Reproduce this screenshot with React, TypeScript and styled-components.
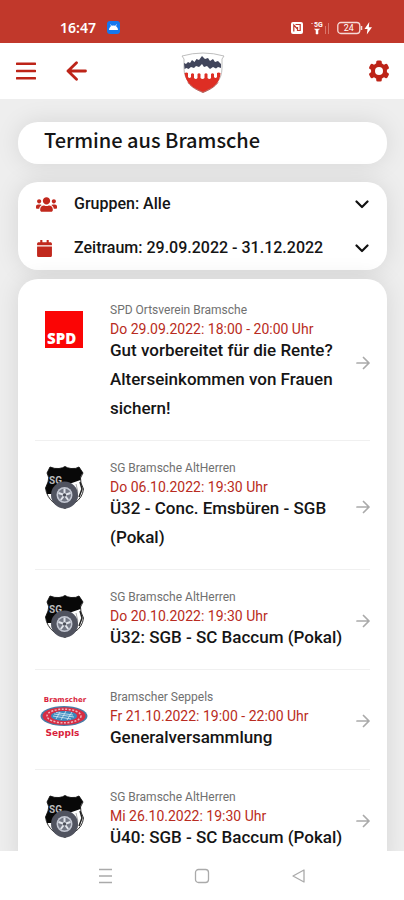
import React from "react";
import styled, { createGlobalStyle } from "styled-components";
import { FaCalendar, FaUsers } from "react-icons/fa";

const GlobalStyle = createGlobalStyle`
  * { box-sizing: border-box; }
  body { margin: 0; background: #fff; font-family: Roboto, "Liberation Sans", sans-serif; color: #151515; }
  button { font: inherit; color: inherit; background: none; border: 0; padding: 0; cursor: pointer; }
  a { color: inherit; text-decoration: none; }
  svg { display: block; flex: none; }
`;

const Screen = styled.div`
  height: 100vh;
  display: flex;
  flex-direction: column;
`;

const StatusBar = styled.div`
  flex: none;
  height: 43px;
  padding: 12px 31px 0 60px;
  display: flex;
  align-items: center;
  justify-content: space-between;
  background: #c1382b;
  color: #fff;
`;

const StatusGroup = styled.div<{ $gap: number }>`
  display: flex;
  align-items: center;
  gap: ${(p) => p.$gap}px;
`;

const Clock = styled.time`
  font: 600 14px/20px "Noto Sans", sans-serif;
`;

const Header = styled.header`
  position: relative;
  z-index: 1;
  flex: none;
  height: 56px;
  padding: 0 14px 0 16px;
  display: grid;
  grid-template-columns: 1fr auto 1fr;
  align-items: center;
  background: #fff;
  color: #bd2418;
`;

const HeaderSide = styled.div<{ $end?: boolean }>`
  display: flex;
  gap: 30px;
  justify-content: ${(p) => (p.$end ? "flex-end" : "flex-start")};
`;

const Content = styled.main`
  flex: 1;
  min-height: 0;
  overflow-y: auto;
  scrollbar-width: none;
  padding: 23px 17px 0 18px;
  background: #eeeeee;
`;

const Card = styled.section`
  background: #fff;
  border-radius: 20px;
  box-shadow: 0 0 24px rgba(0, 0, 0, 0.1);
`;

const TitleCard = styled(Card)`
  padding: 3px 26px 9px;
  margin-bottom: 18px;
`;

const PageTitle = styled.h1`
  margin: 0;
  font: 500 20px/30px "Noto Sans CJK SC", sans-serif;
`;

const FilterCard = styled(Card)`
  margin-bottom: 9px;
`;

const FilterButton = styled.button`
  width: 100%;
  height: 44px;
  padding: 0 18px;
  display: grid;
  grid-template-columns: 22px 1fr auto;
  column-gap: 16px;
  align-items: center;
  text-align: left;
  font-size: 16px;
  line-height: 20px;
  font-weight: 500;
`;

const FilterIcon = styled.span`
  color: #c1281d;
`;

const EventList = styled(Card).attrs({ as: "ul" })`
  list-style: none;
  margin: 0;
  padding: 4px 17px;
`;

const EventItem = styled.li`
  border-bottom: 1px solid #f0f0f0;
  &:last-child { border-bottom: 0; }
`;

const EventLink = styled.a`
  display: flex;
  align-items: center;
  padding: 20px 0 17px 5px;
`;

const LogoBox = styled.div`
  align-self: flex-start;
  flex: none;
  width: 48px;
  height: 48px;
  margin: 2px 22px 0 0;
  display: flex;
  align-items: center;
  justify-content: center;
`;

const EventText = styled.div`
  flex: 1;
  min-width: 0;
`;

const Organizer = styled.div`
  font-size: 12px;
  line-height: 14px;
  margin-bottom: 5px;
  color: #707070;
`;

const EventDate = styled.div`
  font-size: 14px;
  line-height: 14px;
  color: #b92b21;
`;

const EventTitle = styled.h2`
  margin: 0;
  font-size: 17px;
  line-height: 29px;
  font-weight: 500;
`;

const NavBar = styled.nav`
  position: relative;
  flex: none;
  height: 49px;
  padding: 0 96px;
  display: flex;
  align-items: center;
  justify-content: space-between;
  background: #fff;
`;

const NfcIcon = () => (
  <svg width="12" height="12" viewBox="0 0 12 12">
    <rect width="12" height="12" rx="2" fill="#fff" />
    <path d="M2.8 9.5V3L6 6.5M4.5 2.5h4.7v6H6.5V5" fill="none" stroke="#c1382b" strokeWidth="1.2" />
  </svg>
);

const SignalIcon = () => (
  <svg width="20" height="14" viewBox="0 0 20 14">
    <text x="4" y="6" fontSize="7" fontWeight="700" fontFamily="Roboto, sans-serif" fill="#fff">5G</text>
    <path d="M1 2.5h2M4.5 8h5L7 10zM6 9h2v4H6z" fill="#fff" stroke="#fff" strokeWidth=".5" />
    <path d="M15.5 5v8M18.5 2v11" stroke="#d9776d" />
  </svg>
);

const BatteryIcon = () => (
  <svg width="36" height="14" viewBox="0 0 36 14">
    <rect x=".8" y="1.5" width="22" height="11" rx="3" fill="none" stroke="#f6d9d6" strokeWidth="1.3" />
    <path d="M24.5 5v4" stroke="#f6d9d6" strokeWidth="1.5" />
    <text x="11.8" y="10.3" textAnchor="middle" fontSize="9" fontFamily="Roboto, sans-serif" fill="#fff">24</text>
    <path d="M32.3 1l-4.8 7h3l-.7 5.5 5.2-7.2h-3.2z" fill="#fff" />
  </svg>
);

const AndroidIcon = () => (
  <svg width="13" height="13" viewBox="0 0 13 13">
    <rect width="13" height="13" rx="3" fill="#1677ee" />
    <path d="M2 9a4.5 4.5 0 019 0z" fill="#fff" />
    <path d="M3.500 3.500l1.300 2M9.500 3.500l-1.300 2" stroke="#fff" strokeWidth=".8" />
  </svg>
);

const MenuIcon = () => (
  <svg width="20" height="18" viewBox="0 0 20 18">
    <path d="M1 1.7h18M1 9h18M1 16.3h18" stroke="currentColor" strokeWidth="2.6" strokeLinecap="round" />
  </svg>
);

const BackIcon = () => (
  <svg width="21" height="20" viewBox="0 0 21 20">
    <path d="M10.5 1.7L2 10l8.500 8.300M2 10h17.500" fill="none" stroke="currentColor" strokeWidth="2.8" strokeLinecap="round" strokeLinejoin="round" />
  </svg>
);

const GearIcon = () => (
  <svg width="22" height="22" viewBox="0 0 22 22">
    <g fill="currentColor">
      <rect x="8.200" y=".5" width="5.600" height="21" rx="1.500" />
      <rect x="8.200" y=".5" width="5.600" height="21" rx="1.500" transform="rotate(60 11 11)" />
      <rect x="8.200" y=".5" width="5.600" height="21" rx="1.500" transform="rotate(120 11 11)" />
      <circle cx="11" cy="11" r="8" />
    </g>
    <circle cx="11" cy="11" r="4" fill="#fff" />
  </svg>
);

const ChevronIcon = () => (
  <svg width="14" height="10" viewBox="0 0 14 10">
    <path d="M1.500 2.500L7 8 12.500 2.500" fill="none" stroke="#111" strokeWidth="2.2" strokeLinecap="round" strokeLinejoin="round" />
  </svg>
);

const ArrowIcon = () => (
  <svg width="14" height="14" viewBox="0 0 14 14">
    <path d="M1 7h12M7.500 1.500L13 7l-5.500 5.500" fill="none" stroke="#aaa" strokeWidth="1.7" strokeLinecap="round" strokeLinejoin="round" />
  </svg>
);

const CityCrest = () => (
  <svg width="44" height="46" viewBox="0 0 44 46" role="img" aria-label="Bramsche">
    <path d="M1 8Q22 2 43 8l-2 3v9c0 12-7 19-19 24C10 39 3 32 3 20v-9z" fill="#fff" stroke="#b5b5b5" strokeWidth=".9" />
    <path d="M3 15l2 1 2-2 2 1 2-3 2.500 2 2-3 2.500 1 3-4 3 3 3-1 2 3 3-2 2 3 3-1 3 3v4l-3-1-2 1.500-3-1.500-3 2-3-3-3 1-2-3-3 3-3-1-2 2-3-1-2.500 2-2-1-2 1z" fill="#41455b" />
    <path d="M3.500 25q2-1 3.500 0v4q1.500 2 3 0v-3q1.500-1.500 3 0v4q2 2 3.500 0v-4q1.500-1.500 3 0v4q2 2 4 0v-4q1.500-1.500 3 0v4q2 2 3.500 0v-4q1.500-1.500 3 0v3q1.500 2 3 0v-4q1.500-1 3.500 0C39 35 33 39.500 22 44 11 39.500 5 35 3.500 25z" fill="#de2e24" />
    <path d="M7 34.500C11 39.500 15 41.500 22 44.500c7-3 11-5 15-10" fill="none" stroke="#a83028" strokeWidth=".8" />
  </svg>
);

const SpdLogo = () => (
  <svg width="38" height="37" viewBox="0 0 38 37" role="img" aria-label="SPD">
    <rect width="38" height="37" fill="#fb0505" />
    <text x="2" y="33" fontSize="15" fontWeight="800" fontFamily="Open Sans, sans-serif" fill="#fff">SPD</text>
  </svg>
);

const SgLogo = () => (
  <svg width="39" height="43" viewBox="0 0 39 43" role="img" aria-label="SG Bramsche">
    <path d="M5 1q5 2 9 1.500Q18 2 20 .5q2 1.500 6 2Q31 3 34 1l4 6q-4 5-2 10l2.500 6q-1 9-9 14-5 3-9.500 5.500Q14 40 9 37 1.500 31 .5 22L3 16q2-4-1-9z" fill="#fff" stroke="#333" />
    <path d="M5 1q5 2 9 1.500Q18 2 20 .5q2 1.500 6 2Q31 3 34 1l4 6q-3 3-2.500 7L24 18 8 28H2L.5 22 3 16q2-4-1-9z" fill="#080808" />
    <text x="4" y="18" fontSize="10" fontWeight="700" fontFamily="Roboto, sans-serif" fill="#bbb">SG</text>
    <path d="M31 18q3 7 1 15" fill="none" stroke="#aaa" />
    <path d="M35 16l2 7-3 8" fill="none" stroke="#222" strokeWidth="1.500" />
    <circle cx="19.500" cy="29" r="13.500" fill="#50535f" />
    <circle cx="19.500" cy="29" r="8" fill="#c3c7d2" />
    <circle cx="19.500" cy="29" r="6.500" fill="#737784" />
    <path d="M19.500 29V22.500M19.500 29l6-2M19.500 29l3.700 5M19.500 29l-3.700 5M19.500 29l-6-2" stroke="#e2e5ec" strokeWidth="2" />
    <circle cx="19.500" cy="29" r="1.700" fill="#4b4e59" />
  </svg>
);

const SepplsLogo = () => (
  <svg width="48" height="44" viewBox="0 0 48 44" role="img" aria-label="Bramscher Seppls">
    <g fontFamily="DejaVu Sans, sans-serif" fontWeight="700" fill="#d91f3d" textAnchor="middle">
      <text x="25" y="8" fontSize="7">Bramscher</text>
      <text x="22.500" y="42" fontSize="9">Seppls</text>
    </g>
    <ellipse cx="24" cy="22" rx="23.500" ry="10" fill="#477ea9" />
    <ellipse cx="24" cy="22" rx="21.500" ry="8.800" fill="#d72d43" />
    <ellipse cx="24" cy="22" rx="17" ry="6.800" fill="none" stroke="#efb5bc" strokeWidth="1.500" strokeDasharray="2 1.500" />
    <ellipse cx="24" cy="22" rx="13" ry="5" fill="#3988bd" />
    <path d="M14 20l20 3M16 18.500l17 2.500M13 22l18 3M16 25l4-7M21 26l5-9M27 26l5-8" stroke="#d7ebf4" strokeWidth=".8" />
  </svg>
);

const logos = { spd: SpdLogo, sg: SgLogo, seppls: SepplsLogo };

type Entry = { logo: keyof typeof logos; organizer: string; date: string; title: string };

const events: Entry[] = [
  { logo: "spd", organizer: "SPD Ortsverein Bramsche", date: "Do 29.09.2022: 18:00 - 20:00 Uhr", title: "Gut vorbereitet für die Rente? Alterseinkommen von Frauen sichern!" },
  { logo: "sg", organizer: "SG Bramsche AltHerren", date: "Do 06.10.2022: 19:30 Uhr", title: "Ü32 - Conc. Emsbüren - SGB (Pokal)" },
  { logo: "sg", organizer: "SG Bramsche AltHerren", date: "Do 20.10.2022: 19:30 Uhr", title: "Ü32: SGB - SC Baccum (Pokal)" },
  { logo: "seppls", organizer: "Bramscher Seppels", date: "Fr 21.10.2022: 19:00 - 22:00 Uhr", title: "Generalversammlung" },
  { logo: "sg", organizer: "SG Bramsche AltHerren", date: "Mi 26.10.2022: 19:30 Uhr", title: "Ü40: SGB - SC Baccum (Pokal)" },
];

export default function App() {
  return (
    <Screen>
      <GlobalStyle />
      <StatusBar>
        <StatusGroup $gap={11}>
          <Clock>16:47</Clock>
          <AndroidIcon />
        </StatusGroup>
        <StatusGroup $gap={7}>
          <NfcIcon />
          <SignalIcon />
          <BatteryIcon />
        </StatusGroup>
      </StatusBar>
      <Header>
        <HeaderSide>
          <button aria-label="Menü"><MenuIcon /></button>
          <button aria-label="Zurück"><BackIcon /></button>
        </HeaderSide>
        <CityCrest />
        <HeaderSide $end>
          <button aria-label="Einstellungen"><GearIcon /></button>
        </HeaderSide>
      </Header>
      <Content>
        <TitleCard>
          <PageTitle>Termine aus Bramsche</PageTitle>
        </TitleCard>
        <FilterCard>
          <FilterButton>
            <FilterIcon><FaUsers size={21} /></FilterIcon>
            Gruppen: Alle
            <ChevronIcon />
          </FilterButton>
          <FilterButton>
            <FilterIcon><FaCalendar size={17} /></FilterIcon>
            Zeitraum: 29.09.2022 - 31.12.2022
            <ChevronIcon />
          </FilterButton>
        </FilterCard>
        <EventList>
          {events.map((event) => {
            const Logo = logos[event.logo];
            return (
              <EventItem key={event.date}>
                <EventLink href="#">
                  <LogoBox><Logo /></LogoBox>
                  <EventText>
                    <Organizer>{event.organizer}</Organizer>
                    <EventDate>{event.date}</EventDate>
                    <EventTitle>{event.title}</EventTitle>
                  </EventText>
                  <ArrowIcon />
                </EventLink>
              </EventItem>
            );
          })}
        </EventList>
      </Content>
      <NavBar>
        <button aria-label="Letzte Apps">
          <svg width="18" height="16" viewBox="0 0 18 16"><path d="M3 1.500h13M3 8h13M3 14.500h13" stroke="#aaa" strokeWidth="1.300" /></svg>
        </button>
        <button aria-label="Startbildschirm">
          <svg width="16" height="16" viewBox="0 0 16 16"><rect x="1.500" y="1.500" width="13" height="13" rx="3" fill="none" stroke="#aaa" strokeWidth="1.300" /></svg>
        </button>
        <button aria-label="Zurück">
          <svg width="18" height="16" viewBox="0 0 18 16"><path d="M14 2v12L3 8z" fill="none" stroke="#aaa" strokeWidth="1.300" strokeLinejoin="round" /></svg>
        </button>
      </NavBar>
    </Screen>
  );
}
